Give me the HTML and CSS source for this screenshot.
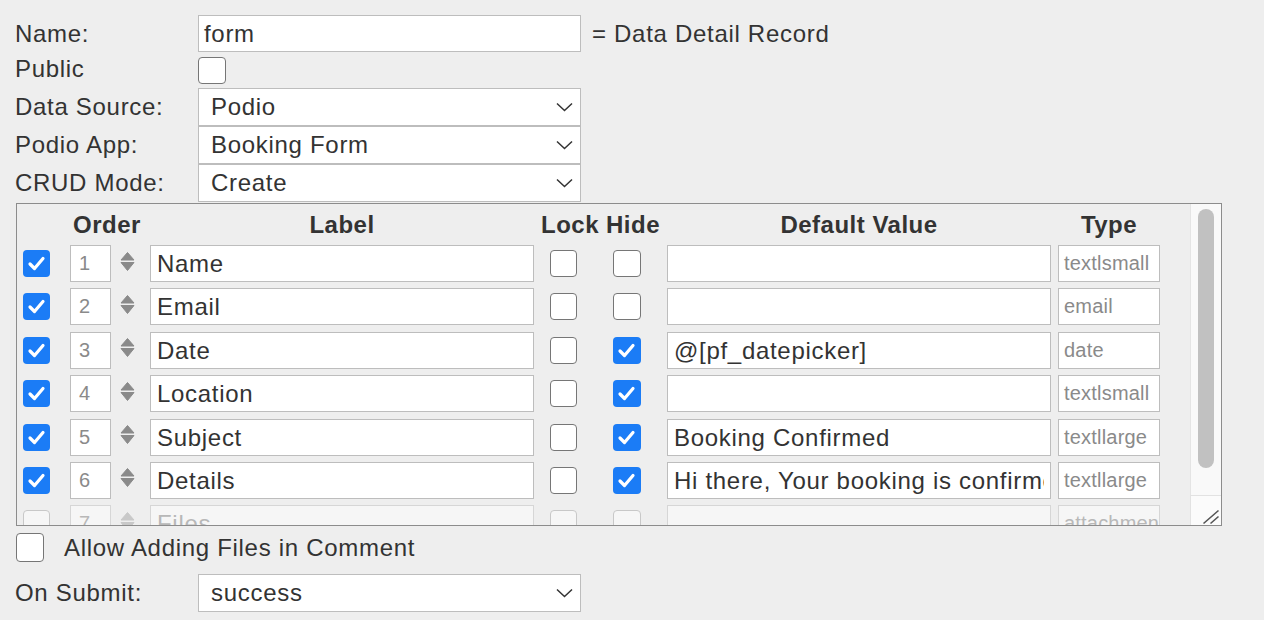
FILE: index.html
```html
<!DOCTYPE html>
<html>
<head>
<meta charset="utf-8">
<link rel="stylesheet" href="styles.css">
</head>
<body>
<div class="page">
  <div class="field f-name">
    <div class="lbl">Name:</div>
    <div class="txt w383">form</div>
    <div class="note">= Data Detail Record</div>
  </div>
  <div class="field f-public">
    <div class="lbl">Public</div>
    <span class="cb"></span>
  </div>
  <div class="field f-sel">
    <div class="lbl">Data Source:</div>
    <div class="select"><span>Podio</span><svg width="17" height="10" viewBox="0 0 17 10"><path d="M1 1.5 L8.5 8.5 L16 1.5" fill="none" stroke="#333" stroke-width="1.5"/></svg></div>
  </div>
  <div class="field f-sel">
    <div class="lbl">Podio App:</div>
    <div class="select"><span>Booking Form</span><svg width="17" height="10" viewBox="0 0 17 10"><path d="M1 1.5 L8.5 8.5 L16 1.5" fill="none" stroke="#333" stroke-width="1.5"/></svg></div>
  </div>
  <div class="field f-sel">
    <div class="lbl">CRUD Mode:</div>
    <div class="select"><span>Create</span><svg width="17" height="10" viewBox="0 0 17 10"><path d="M1 1.5 L8.5 8.5 L16 1.5" fill="none" stroke="#333" stroke-width="1.5"/></svg></div>
  </div>

  <div class="grid-box">
    <div class="grid-scroll">
      <div class="thead">
        <div class="h-order">Order</div>
        <div class="h-label">Label</div>
        <div class="h-lock">Lock</div>
        <div class="h-hide">Hide</div>
        <div class="h-default">Default Value</div>
        <div class="h-type">Type</div>
      </div>

      <div class="row">
        <span class="cb on"><svg width="27" height="27" viewBox="0 0 27 27"><path d="M7 14 L11.5 18.5 L20 8.5" fill="none" stroke="#fff" stroke-width="3.2" stroke-linecap="round" stroke-linejoin="round"/></svg></span>
        <div class="ord">1</div>
        <svg class="spin" width="15" height="24" viewBox="0 0 15 24"><path d="M7.5 0.5 L14 8 L1 8 Z M1 10.5 L14 10.5 L7.5 18.5 Z" fill="#8a8a8a" stroke="#8a8a8a" stroke-width="1" stroke-linejoin="round"/></svg>
        <div class="txt c-label">Name</div>
        <span class="cb c-lock"></span>
        <span class="cb c-hide"></span>
        <div class="txt c-default"></div>
        <div class="typ">textlsmall</div>
      </div>

      <div class="row">
        <span class="cb on"><svg width="27" height="27" viewBox="0 0 27 27"><path d="M7 14 L11.5 18.5 L20 8.5" fill="none" stroke="#fff" stroke-width="3.2" stroke-linecap="round" stroke-linejoin="round"/></svg></span>
        <div class="ord">2</div>
        <svg class="spin" width="15" height="24" viewBox="0 0 15 24"><path d="M7.5 0.5 L14 8 L1 8 Z M1 10.5 L14 10.5 L7.5 18.5 Z" fill="#8a8a8a" stroke="#8a8a8a" stroke-width="1" stroke-linejoin="round"/></svg>
        <div class="txt c-label">Email</div>
        <span class="cb c-lock"></span>
        <span class="cb c-hide"></span>
        <div class="txt c-default"></div>
        <div class="typ">email</div>
      </div>

      <div class="row">
        <span class="cb on"><svg width="27" height="27" viewBox="0 0 27 27"><path d="M7 14 L11.5 18.5 L20 8.5" fill="none" stroke="#fff" stroke-width="3.2" stroke-linecap="round" stroke-linejoin="round"/></svg></span>
        <div class="ord">3</div>
        <svg class="spin" width="15" height="24" viewBox="0 0 15 24"><path d="M7.5 0.5 L14 8 L1 8 Z M1 10.5 L14 10.5 L7.5 18.5 Z" fill="#8a8a8a" stroke="#8a8a8a" stroke-width="1" stroke-linejoin="round"/></svg>
        <div class="txt c-label">Date</div>
        <span class="cb c-lock"></span>
        <span class="cb on c-hide"><svg width="27" height="27" viewBox="0 0 27 27"><path d="M7 14 L11.5 18.5 L20 8.5" fill="none" stroke="#fff" stroke-width="3.2" stroke-linecap="round" stroke-linejoin="round"/></svg></span>
        <div class="txt c-default">@[pf_datepicker]</div>
        <div class="typ">date</div>
      </div>

      <div class="row">
        <span class="cb on"><svg width="27" height="27" viewBox="0 0 27 27"><path d="M7 14 L11.5 18.5 L20 8.5" fill="none" stroke="#fff" stroke-width="3.2" stroke-linecap="round" stroke-linejoin="round"/></svg></span>
        <div class="ord">4</div>
        <svg class="spin" width="15" height="24" viewBox="0 0 15 24"><path d="M7.5 0.5 L14 8 L1 8 Z M1 10.5 L14 10.5 L7.5 18.5 Z" fill="#8a8a8a" stroke="#8a8a8a" stroke-width="1" stroke-linejoin="round"/></svg>
        <div class="txt c-label">Location</div>
        <span class="cb c-lock"></span>
        <span class="cb on c-hide"><svg width="27" height="27" viewBox="0 0 27 27"><path d="M7 14 L11.5 18.5 L20 8.5" fill="none" stroke="#fff" stroke-width="3.2" stroke-linecap="round" stroke-linejoin="round"/></svg></span>
        <div class="txt c-default"></div>
        <div class="typ">textlsmall</div>
      </div>

      <div class="row">
        <span class="cb on"><svg width="27" height="27" viewBox="0 0 27 27"><path d="M7 14 L11.5 18.5 L20 8.5" fill="none" stroke="#fff" stroke-width="3.2" stroke-linecap="round" stroke-linejoin="round"/></svg></span>
        <div class="ord">5</div>
        <svg class="spin" width="15" height="24" viewBox="0 0 15 24"><path d="M7.5 0.5 L14 8 L1 8 Z M1 10.5 L14 10.5 L7.5 18.5 Z" fill="#8a8a8a" stroke="#8a8a8a" stroke-width="1" stroke-linejoin="round"/></svg>
        <div class="txt c-label">Subject</div>
        <span class="cb c-lock"></span>
        <span class="cb on c-hide"><svg width="27" height="27" viewBox="0 0 27 27"><path d="M7 14 L11.5 18.5 L20 8.5" fill="none" stroke="#fff" stroke-width="3.2" stroke-linecap="round" stroke-linejoin="round"/></svg></span>
        <div class="txt c-default">Booking Confirmed</div>
        <div class="typ">textllarge</div>
      </div>

      <div class="row">
        <span class="cb on"><svg width="27" height="27" viewBox="0 0 27 27"><path d="M7 14 L11.5 18.5 L20 8.5" fill="none" stroke="#fff" stroke-width="3.2" stroke-linecap="round" stroke-linejoin="round"/></svg></span>
        <div class="ord">6</div>
        <svg class="spin" width="15" height="24" viewBox="0 0 15 24"><path d="M7.5 0.5 L14 8 L1 8 Z M1 10.5 L14 10.5 L7.5 18.5 Z" fill="#8a8a8a" stroke="#8a8a8a" stroke-width="1" stroke-linejoin="round"/></svg>
        <div class="txt c-label">Details</div>
        <span class="cb c-lock"></span>
        <span class="cb on c-hide"><svg width="27" height="27" viewBox="0 0 27 27"><path d="M7 14 L11.5 18.5 L20 8.5" fill="none" stroke="#fff" stroke-width="3.2" stroke-linecap="round" stroke-linejoin="round"/></svg></span>
        <div class="txt c-default clipped"><span>Hi there, Your booking is confirmed</span></div>
        <div class="typ">textllarge</div>
      </div>

      <div class="row disabled">
        <span class="cb"></span>
        <div class="ord">7</div>
        <svg class="spin" width="15" height="24" viewBox="0 0 15 24"><path d="M7.5 0.5 L14 8 L1 8 Z M1 10.5 L14 10.5 L7.5 18.5 Z" fill="#c8c8c8" stroke="#c8c8c8" stroke-width="1" stroke-linejoin="round"/></svg>
        <div class="txt c-label">Files</div>
        <span class="cb c-lock"></span>
        <span class="cb c-hide"></span>
        <div class="txt c-default"></div>
        <div class="typ">attachment</div>
      </div>
    </div>

    <div class="vbar">
      <div class="track"><div class="thumb"></div></div>
      <div class="corner"><svg width="30" height="30" viewBox="0 0 30 30"><path d="M13.5 28.5 L28.5 15.5 M20.5 28.5 L28.5 21.5" stroke="#555" stroke-width="1.6" fill="none"/></svg></div>
    </div>
  </div>

  <div class="allow">
    <span class="cb big"></span>
    <span class="allow-text">Allow Adding Files in Comment</span>
  </div>

  <div class="field f-submit">
    <div class="lbl">On Submit:</div>
    <div class="select"><span>success</span><svg width="17" height="10" viewBox="0 0 17 10"><path d="M1 1.5 L8.5 8.5 L16 1.5" fill="none" stroke="#333" stroke-width="1.5"/></svg></div>
  </div>
</div>
</body>
</html>
```

FILE: styles.css
```css
html, body {
  margin: 0;
  padding: 0;
  background: #eeeeee;
}
body {
  font-family: "Liberation Sans", Arial, Helvetica, sans-serif;
  font-size: 24px;
  letter-spacing: 0.7px;
  color: #333333;
}
.page {
  padding: 15px 0 0 15px;
}
.field {
  display: flex;
  align-items: center;
}
.lbl {
  width: 183px;
  flex: none;
}
.f-name { height: 37px; }
.f-public { height: 36px; align-items: flex-start; }
.f-public .lbl { line-height: 34px; }
.f-public .cb { margin-top: 5px; width: 28px; height: 27px; }
.f-sel { height: 38px; }

.txt {
  box-sizing: border-box;
  height: 37px;
  background: #ffffff;
  border: 1px solid #bdbdbd;
  padding: 0 6px;
  line-height: 35px;
  white-space: nowrap;
  overflow: hidden;
}
.w383 { width: 383px; padding-left: 5px; }
.note { margin-left: 11px; }

.select {
  box-sizing: border-box;
  width: 383px;
  height: 38px;
  background: #ffffff;
  border: 1px solid #bdbdbd;
  display: flex;
  align-items: center;
  justify-content: space-between;
  padding: 0 7px 0 12px;
}
.select svg { flex: none; }

.cb {
  box-sizing: border-box;
  display: inline-block;
  flex: none;
  width: 27px;
  height: 27px;
  background: #ffffff;
  border: 1px solid #767676;
  border-radius: 4px;
}
.cb svg { display: block; }
.cb.on {
  background: #1b7cf6;
  border: none;
}

.grid-box {
  box-sizing: border-box;
  margin-top: 1px;
  margin-left: 1px;
  width: 1206px;
  height: 323px;
  border: 1px solid #8c8c8c;
  display: flex;
}
.grid-scroll {
  flex: 1;
  overflow: hidden;
}
.vbar {
  flex: none;
  width: 31px;
  display: flex;
  flex-direction: column;
  background: #f9f9f9;
  box-shadow: inset 1px 0 0 #e4e4e4;
}
.track {
  flex: 1;
  padding: 5px 0 0 8px;
}
.thumb {
  width: 16px;
  height: 259px;
  background: #c1c1c1;
  border-radius: 8px;
}
.corner {
  flex: none;
  height: 30px;
  background: #fbfbfb;
  box-shadow: inset 1px 1px 0 #e2e2e2;
}
.corner svg { display: block; }

.thead {
  display: flex;
  align-items: center;
  height: 41px;
  font-weight: bold;
  letter-spacing: 0.5px;
  white-space: nowrap;
}
.h-order { margin-left: 56px; width: 77px; }
.h-label { width: 384px; text-align: center; }
.h-lock { margin-left: 7px; width: 65px; }
.h-hide { width: 61px; }
.h-default { width: 384px; text-align: center; }
.h-type { margin-left: 7px; width: 102px; text-align: center; }

.row {
  display: flex;
  align-items: center;
  height: 37px;
  margin-bottom: 6.4px;
  padding-left: 6px;
}
.ord {
  box-sizing: border-box;
  margin-left: 20px;
  width: 41px;
  height: 37px;
  background: #ffffff;
  border: 1px solid #bdbdbd;
  font-size: 20px;
  line-height: 35px;
  padding-left: 8px;
  color: #8a8a8a;
  flex: none;
}
.spin { margin-left: 9px; flex: none; display: block; }
.c-label { margin-left: 15px; width: 384px; flex: none; }
.c-lock { margin-left: 16px; }
.c-hide { margin-left: 36px; width: 28px; }
.c-default { margin-left: 26px; width: 384px; flex: none; padding-left: 6px; }
.c-default.clipped { padding-right: 0; }
.c-default.clipped span {
  display: block;
  width: 370px;
  overflow: hidden;
}
.typ {
  box-sizing: border-box;
  margin-left: 7px;
  width: 102px;
  height: 37px;
  background: #ffffff;
  border: 1px solid #bdbdbd;
  font-size: 20px;
  letter-spacing: 0.2px;
  line-height: 35px;
  padding-left: 5px;
  color: #8a8a8a;
  white-space: nowrap;
  overflow: hidden;
  flex: none;
}

.row.disabled .cb { background: #f6f6f6; border-color: #c8c8c8; }
.row.disabled .txt,
.row.disabled .ord,
.row.disabled .typ {
  background: #f6f6f6;
  border-color: #d6d6d6;
  color: #b8b8b8;
}

.allow {
  display: flex;
  align-items: center;
  margin-top: 7px;
  margin-left: 1px;
  height: 29px;
}
.cb.big { width: 28px; height: 29px; }
.allow-text { margin-left: 20px; }

.f-submit { margin-top: 12px; height: 38px; }
```
